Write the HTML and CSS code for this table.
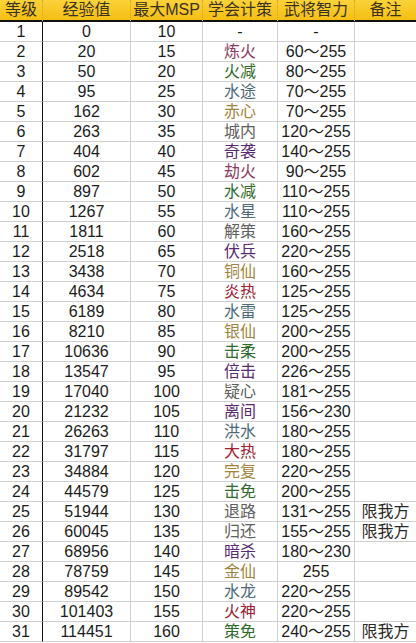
FILE: index.html
```html
<!DOCTYPE html>
<html lang="zh">
<head>
<meta charset="utf-8">
<title>等级表</title>
<link rel="stylesheet" href="styles.css">
</head>
<body>
<table class="sheet">
  <colgroup>
    <col class="c-lv"><col class="c-exp"><col class="c-msp"><col class="c-skill"><col class="c-int"><col class="c-note">
  </colgroup>
  <thead>
    <tr><th>等级</th><th>经验值</th><th>最大MSP</th><th>学会计策</th><th>武将智力</th><th>备注</th></tr>
  </thead>
  <tbody>
    <tr><td>1</td><td>0</td><td>10</td><td>-</td><td>-</td><td></td></tr>
    <tr><td>2</td><td>20</td><td>15</td><td class="pink">炼火</td><td>60～255</td><td></td></tr>
    <tr><td>3</td><td>50</td><td>20</td><td class="green">火减</td><td>80～255</td><td></td></tr>
    <tr><td>4</td><td>95</td><td>25</td><td class="blue">水途</td><td>70～255</td><td></td></tr>
    <tr><td>5</td><td>162</td><td>30</td><td class="gold">赤心</td><td>70～255</td><td></td></tr>
    <tr><td>6</td><td>263</td><td>35</td><td class="gray">城内</td><td>120～255</td><td></td></tr>
    <tr><td>7</td><td>404</td><td>40</td><td class="purple">奇袭</td><td>140～255</td><td></td></tr>
    <tr><td>8</td><td>602</td><td>45</td><td class="pink">劫火</td><td>90～255</td><td></td></tr>
    <tr><td>9</td><td>897</td><td>50</td><td class="green">水减</td><td>110～255</td><td></td></tr>
    <tr><td>10</td><td>1267</td><td>55</td><td class="blue">水星</td><td>110～255</td><td></td></tr>
    <tr><td>11</td><td>1811</td><td>60</td><td class="gray">解策</td><td>160～255</td><td></td></tr>
    <tr><td>12</td><td>2518</td><td>65</td><td class="purple">伏兵</td><td>220～255</td><td></td></tr>
    <tr><td>13</td><td>3438</td><td>70</td><td class="gold">铜仙</td><td>160～255</td><td></td></tr>
    <tr><td>14</td><td>4634</td><td>75</td><td class="red">炎热</td><td>125～255</td><td></td></tr>
    <tr><td>15</td><td>6189</td><td>80</td><td class="blue">水雷</td><td>125～255</td><td></td></tr>
    <tr><td>16</td><td>8210</td><td>85</td><td class="gold">银仙</td><td>200～255</td><td></td></tr>
    <tr><td>17</td><td>10636</td><td>90</td><td class="green">击柔</td><td>200～255</td><td></td></tr>
    <tr><td>18</td><td>13547</td><td>95</td><td class="purple">倍击</td><td>226～255</td><td></td></tr>
    <tr><td>19</td><td>17040</td><td>100</td><td class="gray">疑心</td><td>181～255</td><td></td></tr>
    <tr><td>20</td><td>21232</td><td>105</td><td class="purple">离间</td><td>156～230</td><td></td></tr>
    <tr><td>21</td><td>26263</td><td>110</td><td class="blue">洪水</td><td>180～255</td><td></td></tr>
    <tr><td>22</td><td>31797</td><td>115</td><td class="red">大热</td><td>180～255</td><td></td></tr>
    <tr><td>23</td><td>34884</td><td>120</td><td class="gold">完复</td><td>220～255</td><td></td></tr>
    <tr><td>24</td><td>44579</td><td>125</td><td class="green">击免</td><td>200～255</td><td></td></tr>
    <tr><td>25</td><td>51944</td><td>130</td><td class="gray">退路</td><td>131～255</td><td class="note">限我方</td></tr>
    <tr><td>26</td><td>60045</td><td>135</td><td class="gray">归还</td><td>155～255</td><td class="note">限我方</td></tr>
    <tr><td>27</td><td>68956</td><td>140</td><td class="purple">暗杀</td><td>180～230</td><td></td></tr>
    <tr><td>28</td><td>78759</td><td>145</td><td class="gold">金仙</td><td>255</td><td></td></tr>
    <tr><td>29</td><td>89542</td><td>150</td><td class="blue">水龙</td><td>220～255</td><td></td></tr>
    <tr><td>30</td><td>101403</td><td>155</td><td class="red">火神</td><td>220～255</td><td></td></tr>
    <tr><td>31</td><td>114451</td><td>160</td><td class="green">策免</td><td>240～255</td><td class="note">限我方</td></tr>
  </tbody>
</table>
</body>
</html>
```
FILE: styles.css
```css
html, body {
  margin: 0;
  padding: 0;
  background: #ffffff;
}

.sheet {
  width: 416px;
  table-layout: fixed;
  border-collapse: separate;
  border-spacing: 0;
  font-family: "Liberation Sans", "Noto Sans CJK SC", sans-serif;
  font-size: 16px;
  color: #1c1c1c;
}

.c-lv { width: 43px; }
.c-exp { width: 88px; }
.c-msp { width: 72px; }
.c-skill { width: 75px; }
.c-int { width: 77px; }
.c-note { width: 61px; }

.sheet th {
  height: 20px;
  padding: 0;
  font-weight: normal;
  color: #3a3220;
  background: linear-gradient(#fbd23a, #f5bf12);
  border-bottom: 2px solid #111;
  border-right: 1px dotted #c9a23a;
  line-height: 20px;
  text-align: center;
  white-space: nowrap;
  overflow: hidden;
}

.sheet th:last-child { border-right: none; }

.sheet td {
  height: 19px;
  padding: 0;
  border-bottom: 1px solid #cfcfcf;
  border-right: 1px solid #cfcfcf;
  line-height: 19px;
  text-align: center;
  white-space: nowrap;
  overflow: hidden;
}

.sheet td:first-child { border-right-color: #111; }
.sheet td:last-child { border-right: none; }

.pink { color: #8a3a62; }
.green { color: #2f6a2a; }
.blue { color: #4f6878; }
.gold { color: #a08440; }
.gray { color: #606060; }
.purple { color: #5a2a70; }
.red { color: #a02030; }
.note { color: #2a2a2a; }
```
